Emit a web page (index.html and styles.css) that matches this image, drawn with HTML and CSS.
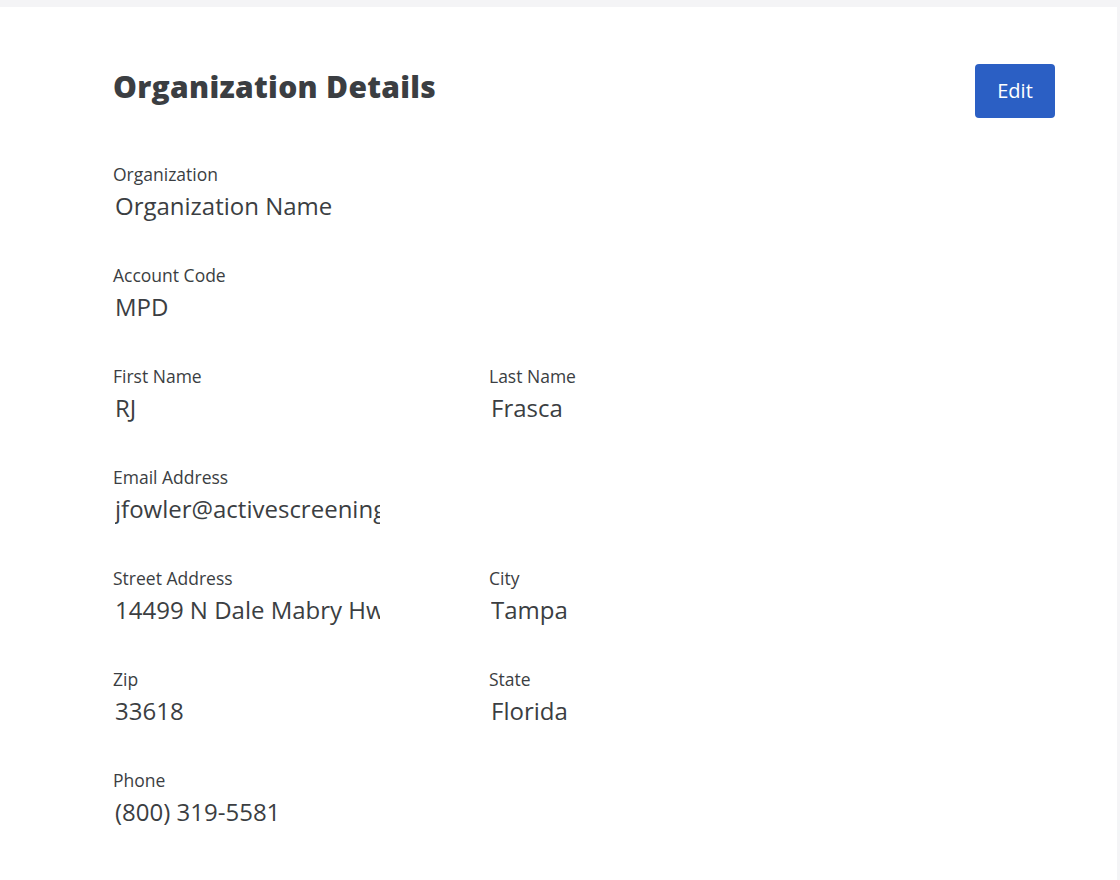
FILE: index.html
```html
<!DOCTYPE html>
<html lang="en">
<head>
    <meta charset="UTF-8">
    <meta name="viewport" content="width=device-width, initial-scale=1.0">
    <title>Organization Details</title>
    <link rel="stylesheet" href="styles.css">
</head>
<body>
    <div class="page">
        <div class="header">
            <h1>Organization Details</h1>
            <button type="button" class="edit-btn">Edit</button>
        </div>
        <div class="fields">
            <div class="field full">
                <label>Organization</label>
                <input type="text" class="value" value="Organization Name" readonly>
            </div>
            <div class="field full">
                <label>Account Code</label>
                <input type="text" class="value" value="MPD" readonly>
            </div>
            <div class="field">
                <label>First Name</label>
                <input type="text" class="value" value="RJ" readonly>
            </div>
            <div class="field">
                <label>Last Name</label>
                <input type="text" class="value" value="Frasca" readonly>
            </div>
            <div class="field full">
                <label>Email Address</label>
                <input type="text" class="value" value="jfowler@activescreening.com" readonly>
            </div>
            <div class="field">
                <label>Street Address</label>
                <input type="text" class="value" value="14499 N Dale Mabry Hwy" readonly>
            </div>
            <div class="field">
                <label>City</label>
                <input type="text" class="value" value="Tampa" readonly>
            </div>
            <div class="field">
                <label>Zip</label>
                <input type="text" class="value" value="33618" readonly>
            </div>
            <div class="field">
                <label>State</label>
                <input type="text" class="value" value="Florida" readonly>
            </div>
            <div class="field full">
                <label>Phone</label>
                <input type="text" class="value" value="(800) 319-5581" readonly>
            </div>
        </div>
    </div>
</body>
</html>
```

FILE: styles.css
```css
body {
    font-family: "Open Sans", Arial, sans-serif;
    margin: 0;
    padding: 0;
    background-color: #f4f4f6;
    color: #3b3e42;
}
.page {
    background: #fff;
    margin: 7px 3px 0 0;
    min-height: 873px;
    padding: 57px 62px 0 113px;
    box-sizing: border-box;
}
.header {
    display: flex;
    justify-content: space-between;
    align-items: flex-start;
}
h1 {
    margin: 2px 0 0;
    font-size: 30px;
    line-height: 42px;
    font-weight: 800;
    letter-spacing: 0.3px;
    color: #3b3e42;
}
.edit-btn {
    width: 80px;
    height: 54px;
    padding: 0 0 2px;
    background: #2b5fc4;
    color: #fff;
    border: none;
    border-radius: 4px;
    font-family: inherit;
    font-size: 20px;
    cursor: pointer;
}
.fields {
    display: grid;
    grid-template-columns: 376px 376px;
    row-gap: 41px;
    margin-top: 44px;
}
.field.full {
    grid-column: 1 / -1;
}
.field label {
    display: block;
    font-size: 17.5px;
    line-height: 24px;
    margin-bottom: 4px;
}
.value {
    display: block;
    width: 265px;
    padding: 0 0 0 2px;
    border: none;
    outline: none;
    font-family: inherit;
    font-size: 24px;
    line-height: 32px;
    height: 32px;
    color: #3b3e42;
    background: transparent;
}
```
